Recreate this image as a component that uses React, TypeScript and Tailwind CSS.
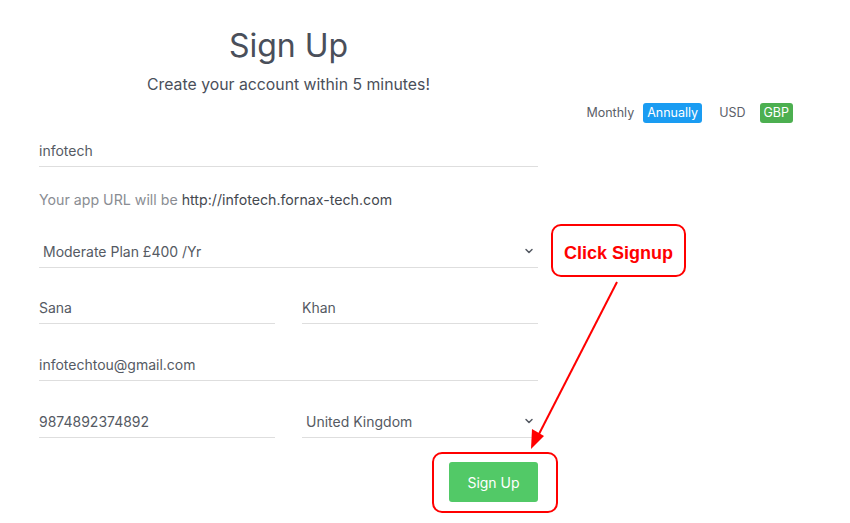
import { ChevronDown } from "lucide-react";

const font = { fontFamily: "Inter, 'Noto Sans', sans-serif" };

function Field({ value, select, className = "" }: { value: string; select?: boolean; className?: string }) {
  return (
    <div
      className={`flex h-[33px] items-center justify-between border-b border-[#dedede] text-[14px] text-[#555a63] ${
        select ? "pl-1 pr-[3px]" : ""
      } ${className}`}
    >
      <span>{value}</span>
      {select && <ChevronDown size={12} strokeWidth={3} className="text-[#555a63]" />}
    </div>
  );
}

export default function App() {
  return (
    <div className="relative h-[523px] w-[850px] overflow-hidden bg-white" style={font}>
      {/* Header */}
      <div className="ml-[39px] w-[499px] pt-[26px] text-center">
        <h1 className="text-[32px] leading-[40px] text-[#4a4f5a]">Sign Up</h1>
        <p className="mt-[7px] text-[15.8px] leading-[24px] text-[#4a4f5a]">
          Create your account within 5 minutes!
        </p>
      </div>

      {/* Plan toggles */}
      <div className="mt-[6px] flex h-[20px] items-center justify-end pr-[57px] text-[12.5px]">
        <span className="text-[#5b6068]">Monthly</span>
        <span className="ml-[9px] rounded-[3px] bg-[#1a9cf2] px-[4px] leading-[20px] text-white">Annually</span>
        <span className="ml-[17px] text-[#5b6068]">USD</span>
        <span className="ml-[14px] rounded-[3px] bg-[#4caf50] px-[4px] leading-[20px] text-white">GBP</span>
      </div>

      {/* Form */}
      <div className="ml-[39px] w-[499px]">
        <Field value="infotech" className="mt-[11px]" />
        <p className="mt-[23px] text-[14.2px] leading-[20px] text-[#8a8d93]">
          Your app URL will be <span className="text-[#44484f]">http://infotech.fornax-tech.com</span>
        </p>
        <Field value="Moderate Plan £400 /Yr" select className="mt-[25px]" />
        <div className="mt-[23px] grid grid-cols-[236px_236px] justify-between">
          <Field value="Sana" />
          <Field value="Khan" />
        </div>
        <Field value="infotechtou@gmail.com" className="mt-[24px]" />
        <div className="mt-[24px] grid grid-cols-[236px_236px] justify-between">
          <Field value="9874892374892" />
          <Field value="United Kingdom" select />
        </div>
        <div className="mt-[24px] flex justify-end">
          <button className="h-[40px] w-[89px] rounded-[3px] bg-[#52c967] text-[14px] text-white">Sign Up</button>
        </div>
      </div>

      {/* Annotations */}
      <div className="absolute left-[432px] top-[452px] h-[61px] w-[126px] rounded-[10px] border-2 border-[#f00]" />
      <div
        className="absolute left-[551px] top-[224px] flex h-[53px] w-[135px] items-center justify-center rounded-[10px] border-2 border-[#f00] pt-[5px] text-[18px] font-bold text-[#f00]"
        style={{ fontFamily: "'Liberation Sans', Arial, sans-serif" }}
      >
        Click Signup
      </div>
      <svg className="absolute left-0 top-0" width="850" height="523">
        <line x1="617" y1="282" x2="539" y2="434" stroke="#f00" strokeWidth="2" />
        <polygon points="531,449 532,429 544,436" fill="#f00" />
      </svg>
    </div>
  );
}
